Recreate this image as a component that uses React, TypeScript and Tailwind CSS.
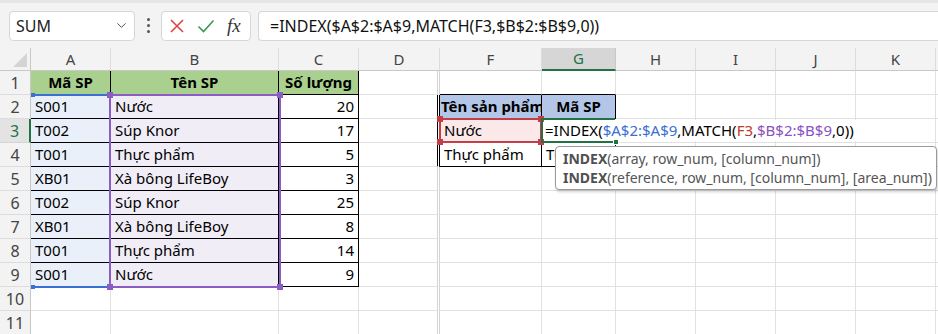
import { ChevronDown } from "lucide-react";

const COLS = ["A", "B", "C", "D", "F", "G", "H", "I", "J", "K"];

const DATA: [string, string, number][] = [
  ["S001", "Nước", 20],
  ["T002", "Súp Knor", 17],
  ["T001", "Thực phẩm", 5],
  ["XB01", "Xà bông LifeBoy", 3],
  ["T002", "Súp Knor", 25],
  ["XB01", "Xà bông LifeBoy", 8],
  ["T001", "Thực phẩm", 14],
  ["S001", "Nước", 9],
];

const font = "font-['Noto_Sans',sans-serif]";

function Cell({
  children,
  className = "",
  r = "border-r-[#e1e1e1]",
  b = "border-b-[#e1e1e1]",
}: {
  children?: React.ReactNode;
  className?: string;
  r?: string;
  b?: string;
}) {
  return (
    <div
      className={`border-r border-b ${r} ${b} flex items-center px-[4px] text-[15px] text-black whitespace-nowrap overflow-hidden ${className}`}
    >
      {children}
    </div>
  );
}

function FormulaBar() {
  return (
    <div className="h-[48px] bg-[#f3f3f3] border-t-[3px] border-t-[#e6e6e6] flex items-center gap-[7px] pl-[9px]">
      <div className="w-[126px] h-[30px] bg-white border border-[#d6d6d6] rounded-[4px] flex items-center justify-between pl-[6px] pr-[5px]">
        <span className="text-[16px] text-[#222]">SUM</span>
        <ChevronDown size={15} strokeWidth={1.5} className="text-[#444]" />
      </div>
      <div className="w-[12px] flex flex-col items-center gap-[3px]">
        <div className="w-[3px] h-[3px] bg-[#555] rounded-full" />
        <div className="w-[3px] h-[3px] bg-[#555] rounded-full" />
        <div className="w-[3px] h-[3px] bg-[#555] rounded-full" />
      </div>
      <div className="w-[90px] h-[30px] bg-white border border-[#d6d6d6] rounded-[4px] flex items-center gap-[12px] pl-[7px]">
        <svg width="16" height="16" viewBox="0 0 16 16">
          <path d="M2 2 L14 14 M14 2 L2 14" stroke="#e04343" strokeWidth="1.6" fill="none" />
        </svg>
        <svg width="18" height="16" viewBox="0 0 18 16">
          <path d="M1.5 8.5 L6.5 13.5 L16.5 2.5" stroke="#3a9a4d" strokeWidth="1.6" fill="none" />
        </svg>
        <span className="font-['Liberation_Serif',serif] italic text-[19px] text-[#333] leading-none">fx</span>
      </div>
      <div className="flex-1 h-[30px] bg-white border border-[#d6d6d6] rounded-l-[4px] border-r-0 flex items-center pl-[11px]">
        <span className="text-[16px] text-[#111]">=INDEX($A$2:$A$9,MATCH(F3,$B$2:$B$9,0))</span>
      </div>
    </div>
  );
}

function Handle({ className }: { className: string }) {
  return <div className={`absolute w-[6px] h-[6px] ${className}`} />;
}

function Sheet() {
  const header = (
    <>
      <div className="border-r border-b border-r-[#c8c8c8] border-b-[#c8c8c8] bg-[#f3f3f3] flex items-end justify-end p-[3px]">
        <svg width="14" height="14" viewBox="0 0 14 14">
          <path d="M14 0 L14 14 L0 14 Z" fill="#d4d4d4" />
        </svg>
      </div>
      {COLS.map((c) => (
        <div
          key={c}
          className={`border-r border-b flex items-center justify-center text-[15px] ${
            c === "G"
              ? "bg-[#d6d6d6] border-r-[#c8c8c8] border-b-[2px] border-b-[#217346] text-[#217346]"
              : "bg-[#f3f3f3] border-r-[#dcdcdc] border-b-[#c8c8c8] text-[#444]"
          }`}
        >
          {c}
        </div>
      ))}
      <div className="bg-[#f3f3f3] border-b border-b-[#c8c8c8]" />
    </>
  );

  const rows = [];
  for (let i = 1; i <= 11; i++) {
    const d = i >= 2 && i <= 9 ? DATA[i - 2] : null;
    const rowHead = (
      <div
        key={`h${i}`}
        className={`border-b flex items-center justify-center text-[16px] ${
          i === 3
            ? "bg-[#e3e3e3] border-r-[2px] border-r-[#217346] text-[#217346] border-b-[#d4d4d4]"
            : "bg-[#f3f3f3] border-r border-r-[#c8c8c8] border-b-[#dcdcdc] text-[#444]"
        }`}
      >
        {i}
      </div>
    );
    const cells: React.ReactNode[] = [];
    // A, B, C
    if (i === 1) {
      cells.push(
        <Cell key="A" className="bg-[#a9d08e] font-bold justify-center" r="border-r-black" b="border-b-black">Mã SP</Cell>,
        <Cell key="B" className="bg-[#a9d08e] font-bold justify-center" r="border-r-black" b="border-b-black">Tên SP</Cell>,
        <Cell key="C" className="bg-[#a9d08e] font-bold justify-center" r="border-r-black" b="border-b-black">Số lượng</Cell>
      );
    } else if (d) {
      cells.push(
        <Cell key="A" className="bg-[#eaf0fa]" r="border-r-black" b="border-b-black">{d[0]}</Cell>,
        <Cell key="B" className="bg-[#f1edf7]" r="border-r-black" b="border-b-black">{d[1]}</Cell>,
        <Cell key="C" className="justify-end" r="border-r-black" b="border-b-black">{d[2]}</Cell>
      );
    } else {
      cells.push(<Cell key="A" />, <Cell key="B" />, <Cell key="C" />);
    }
    // D
    cells.push(<Cell key="D" className="border-r-[3px] border-double" r={i >= 2 && i <= 4 ? "border-r-black" : "border-r-[#d4d4d4]"} />);
    // F, G
    if (i === 1) {
      cells.push(<Cell key="F" b="border-b-black" />, <Cell key="G" b="border-b-black" />);
    } else if (i === 2) {
      cells.push(
        <Cell key="F" className="bg-[#b4c6e7] font-bold !px-[1px]" r="border-r-black" b="border-b-black">Tên sản phẩm</Cell>,
        <Cell key="G" className="bg-[#b4c6e7] font-bold justify-center" r="border-r-black" b="border-b-black">Mã SP</Cell>
      );
    } else if (i === 3) {
      cells.push(
        <div key="F" className="relative border-r border-b border-r-black border-b-black bg-[#fbe9e9] flex items-center px-[4px] text-[15px]">
          Nước
          {/* red reference F3 */}
          <div className="absolute -left-[1px] -top-[1px] -right-[1px] -bottom-[1px] border-2 border-[#c43e48]" />
          <Handle className="-left-[3px] -top-[3px] bg-[#c43e48]" />
          <Handle className="-right-[3px] -top-[3px] bg-[#c43e48]" />
          <Handle className="-left-[3px] -bottom-[3px] bg-[#c43e48]" />
          <Handle className="-right-[3px] -bottom-[3px] bg-[#c43e48]" />
        </div>,
        <div key="G" className="relative border-b border-b-black">
          <div className="absolute -left-[1px] -top-[1px] -bottom-[1px] w-[74px] border-2 border-r-0 border-[#217346] z-20" />
          <div className="absolute -right-[3px] -bottom-[3px] w-[6px] h-[6px] bg-[#217346] border border-white z-20" />
          <span className="absolute left-[3px] top-[1px] h-[21px] flex items-center bg-white pr-[4px] text-[15px] whitespace-nowrap z-10">
            <span className="text-black">=INDEX(</span>
            <span className="text-[#3b6fd1]">$A$2:$A$9</span>
            <span className="text-black">,MATCH(</span>
            <span className="text-[#c0392b]">F3</span>
            <span className="text-black">,</span>
            <span className="text-[#8b4fc1]">$B$2:$B$9</span>
            <span className="text-black">,0))</span>
          </span>
        </div>
      );
    } else if (i === 4) {
      cells.push(
        <Cell key="F" r="border-r-black" b="border-b-black">Thực phẩm</Cell>,
        <Cell key="G" r="border-r-black" b="border-b-black">T001</Cell>
      );
    } else {
      cells.push(<Cell key="F" />, <Cell key="G" />);
    }
    cells.push(<Cell key="H" />, <Cell key="I" />, <Cell key="J" />, <Cell key="K" />, <div key="Z" className="border-b border-b-[#e1e1e1]" />);
    rows.push(rowHead, ...cells);
  }

  return (
    <div className="relative grid grid-cols-[31px_80px_168px_80px_81px_102px_74px_80px_80px_80px_80px_1fr] grid-rows-[23px_repeat(11,24px)]">
      {header}
      {rows}

      {/* blue reference range A2:A9 */}
      <div className="absolute left-[31px] top-[46px] w-[80px] h-[194px] border-y-2 border-[#3b6fd1]" />
      <div className="absolute left-[31px] top-[45px] w-[4px] h-[4px] bg-[#3b6fd1]" />
      <div className="absolute left-[31px] top-[237px] w-[4px] h-[4px] bg-[#3b6fd1]" />

      {/* purple reference range B2:B9 */}
      <div className="absolute left-[109px] top-[46px] w-[172px] h-[194px] border-2 border-[#8b5cc4]">
        <Handle className="-left-[4px] -top-[4px] bg-[#8b5cc4]" />
        <Handle className="-right-[4px] -top-[4px] bg-[#8b5cc4]" />
        <Handle className="-left-[4px] -bottom-[4px] bg-[#8b5cc4]" />
        <Handle className="-right-[4px] -bottom-[4px] bg-[#8b5cc4]" />
      </div>

      {/* function tooltip */}
      <div className="absolute left-[555px] top-[98px] w-[382px] h-[44px] bg-white border border-[#9a9a9a] rounded-[4px] shadow-[1px_2px_3px_rgba(0,0,0,0.18)] z-30 pl-[7px] pt-[2px] text-[14px] leading-[19px] text-[#555]">
        <div className="whitespace-nowrap">
          <span className="font-bold text-[#505050]">INDEX</span>(array, row_num, [column_num])
        </div>
        <div className="whitespace-nowrap">
          <span className="font-bold text-[#505050]">INDEX</span>(reference, row_num, [column_num], [area_num])
        </div>
      </div>
    </div>
  );
}

export default function App() {
  return (
    <div className={`w-[938px] h-[334px] overflow-hidden bg-white ${font}`}>
      <FormulaBar />
      <Sheet />
    </div>
  );
}
